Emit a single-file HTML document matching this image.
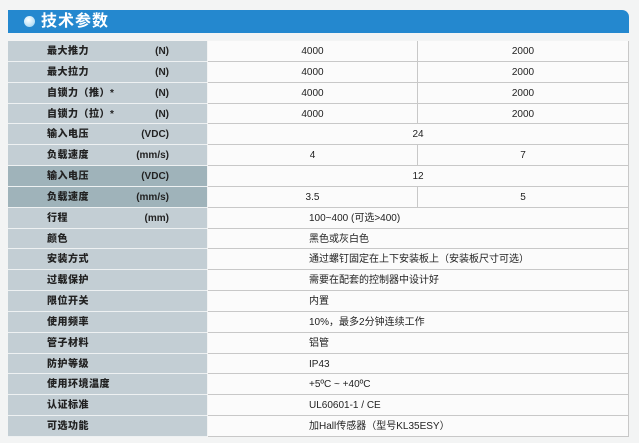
<!DOCTYPE html>
<html><head><meta charset="utf-8"><style>
body{margin:0;width:639px;height:443px;background:#f3f4f4;font-family:"Liberation Sans","Noto Sans CJK SC",sans-serif;position:relative;overflow:hidden}
.hd{position:absolute;left:8px;top:10px;width:621px;height:23px;background:#2488cf;border-top-right-radius:7px}
.dot{position:absolute;left:16px;top:6px;width:11px;height:11px;border-radius:50%;background:radial-gradient(circle at 40% 35%,#fff,#bfe3f7 60%,#8cc8ea)}
.hd span{position:absolute;left:33px;top:1px;color:#fff;font-weight:bold;font-size:16px;line-height:21px;letter-spacing:1px}
.r{position:absolute;left:8px;width:621px;height:20.84px;font-size:10px;line-height:22px;color:#222}
.l{position:absolute;left:0;top:0;width:199px;height:19.84px;background:#c3ced4;border-bottom:1px solid #eef1f2;font-weight:bold}
.l.d{background:#9fb3ba}
.l b{position:absolute;left:39px;letter-spacing:0.5px}
.l i{position:absolute;right:38px;font-style:normal}
.v{position:absolute;left:200px;top:0;height:19.84px;background:#fbfbfb;border-bottom:1px solid #c8c8c8;border-right:1px solid #c8c8c8;width:420px}
.c{position:absolute;top:0;text-align:center}
.a{left:0;width:209px;border-right:1px solid #c8c8c8;height:19.84px}
.b{left:210px;width:210px}
.f{left:0;width:420px}
.t{position:absolute;left:101px}
</style></head><body>
<div class="hd"><div class="dot"></div><span>技术参数</span></div>
<div id="t"></div>
<script>
var rows=[
["最大推力","(N)",["4000","2000"]],
["最大拉力","(N)",["4000","2000"]],
["自锁力（推）*","(N)",["4000","2000"]],
["自锁力（拉）*","(N)",["4000","2000"]],
["输入电压","(VDC)","24c"],
["负载速度","(mm/s)",["4","7"]],
["输入电压","(VDC)","12c",1],
["负载速度","(mm/s)",["3.5","5"],1],
["行程","(mm)","100~400 (可选>400)"],
["颜色","","黑色或灰白色"],
["安装方式","","通过螺钉固定在上下安装板上（安装板尺寸可选）"],
["过载保护","","需要在配套的控制器中设计好"],
["限位开关","","内置"],
["使用频率","","10%，最多2分钟连续工作"],
["管子材料","","铝管"],
["防护等级","","IP43"],
["使用环境温度","","+5ºC ~ +40ºC"],
["认证标准","","UL60601-1 / CE"],
["可选功能","","加Hall传感器（型号KL35ESY）"]];
var h="";
rows.forEach(function(r,i){
 var top=41+i*20.84;
 var v;
 if(Array.isArray(r[2]))v='<div class="c a">'+r[2][0]+'</div><div class="c b">'+r[2][1]+'</div>';
 else if(/c$/.test(r[2])&&r[2].length<4)v='<div class="c f">'+r[2].slice(0,-1)+'</div>';
 else v='<div class="t">'+r[2]+'</div>';
 h+='<div class="r" style="top:'+top+'px"><div class="l'+(r[3]?' d':'')+'"><b>'+r[0]+'</b><i>'+r[1]+'</i></div><div class="v">'+v+'</div></div>';
});
document.getElementById("t").innerHTML=h;
</script>
</body></html>
